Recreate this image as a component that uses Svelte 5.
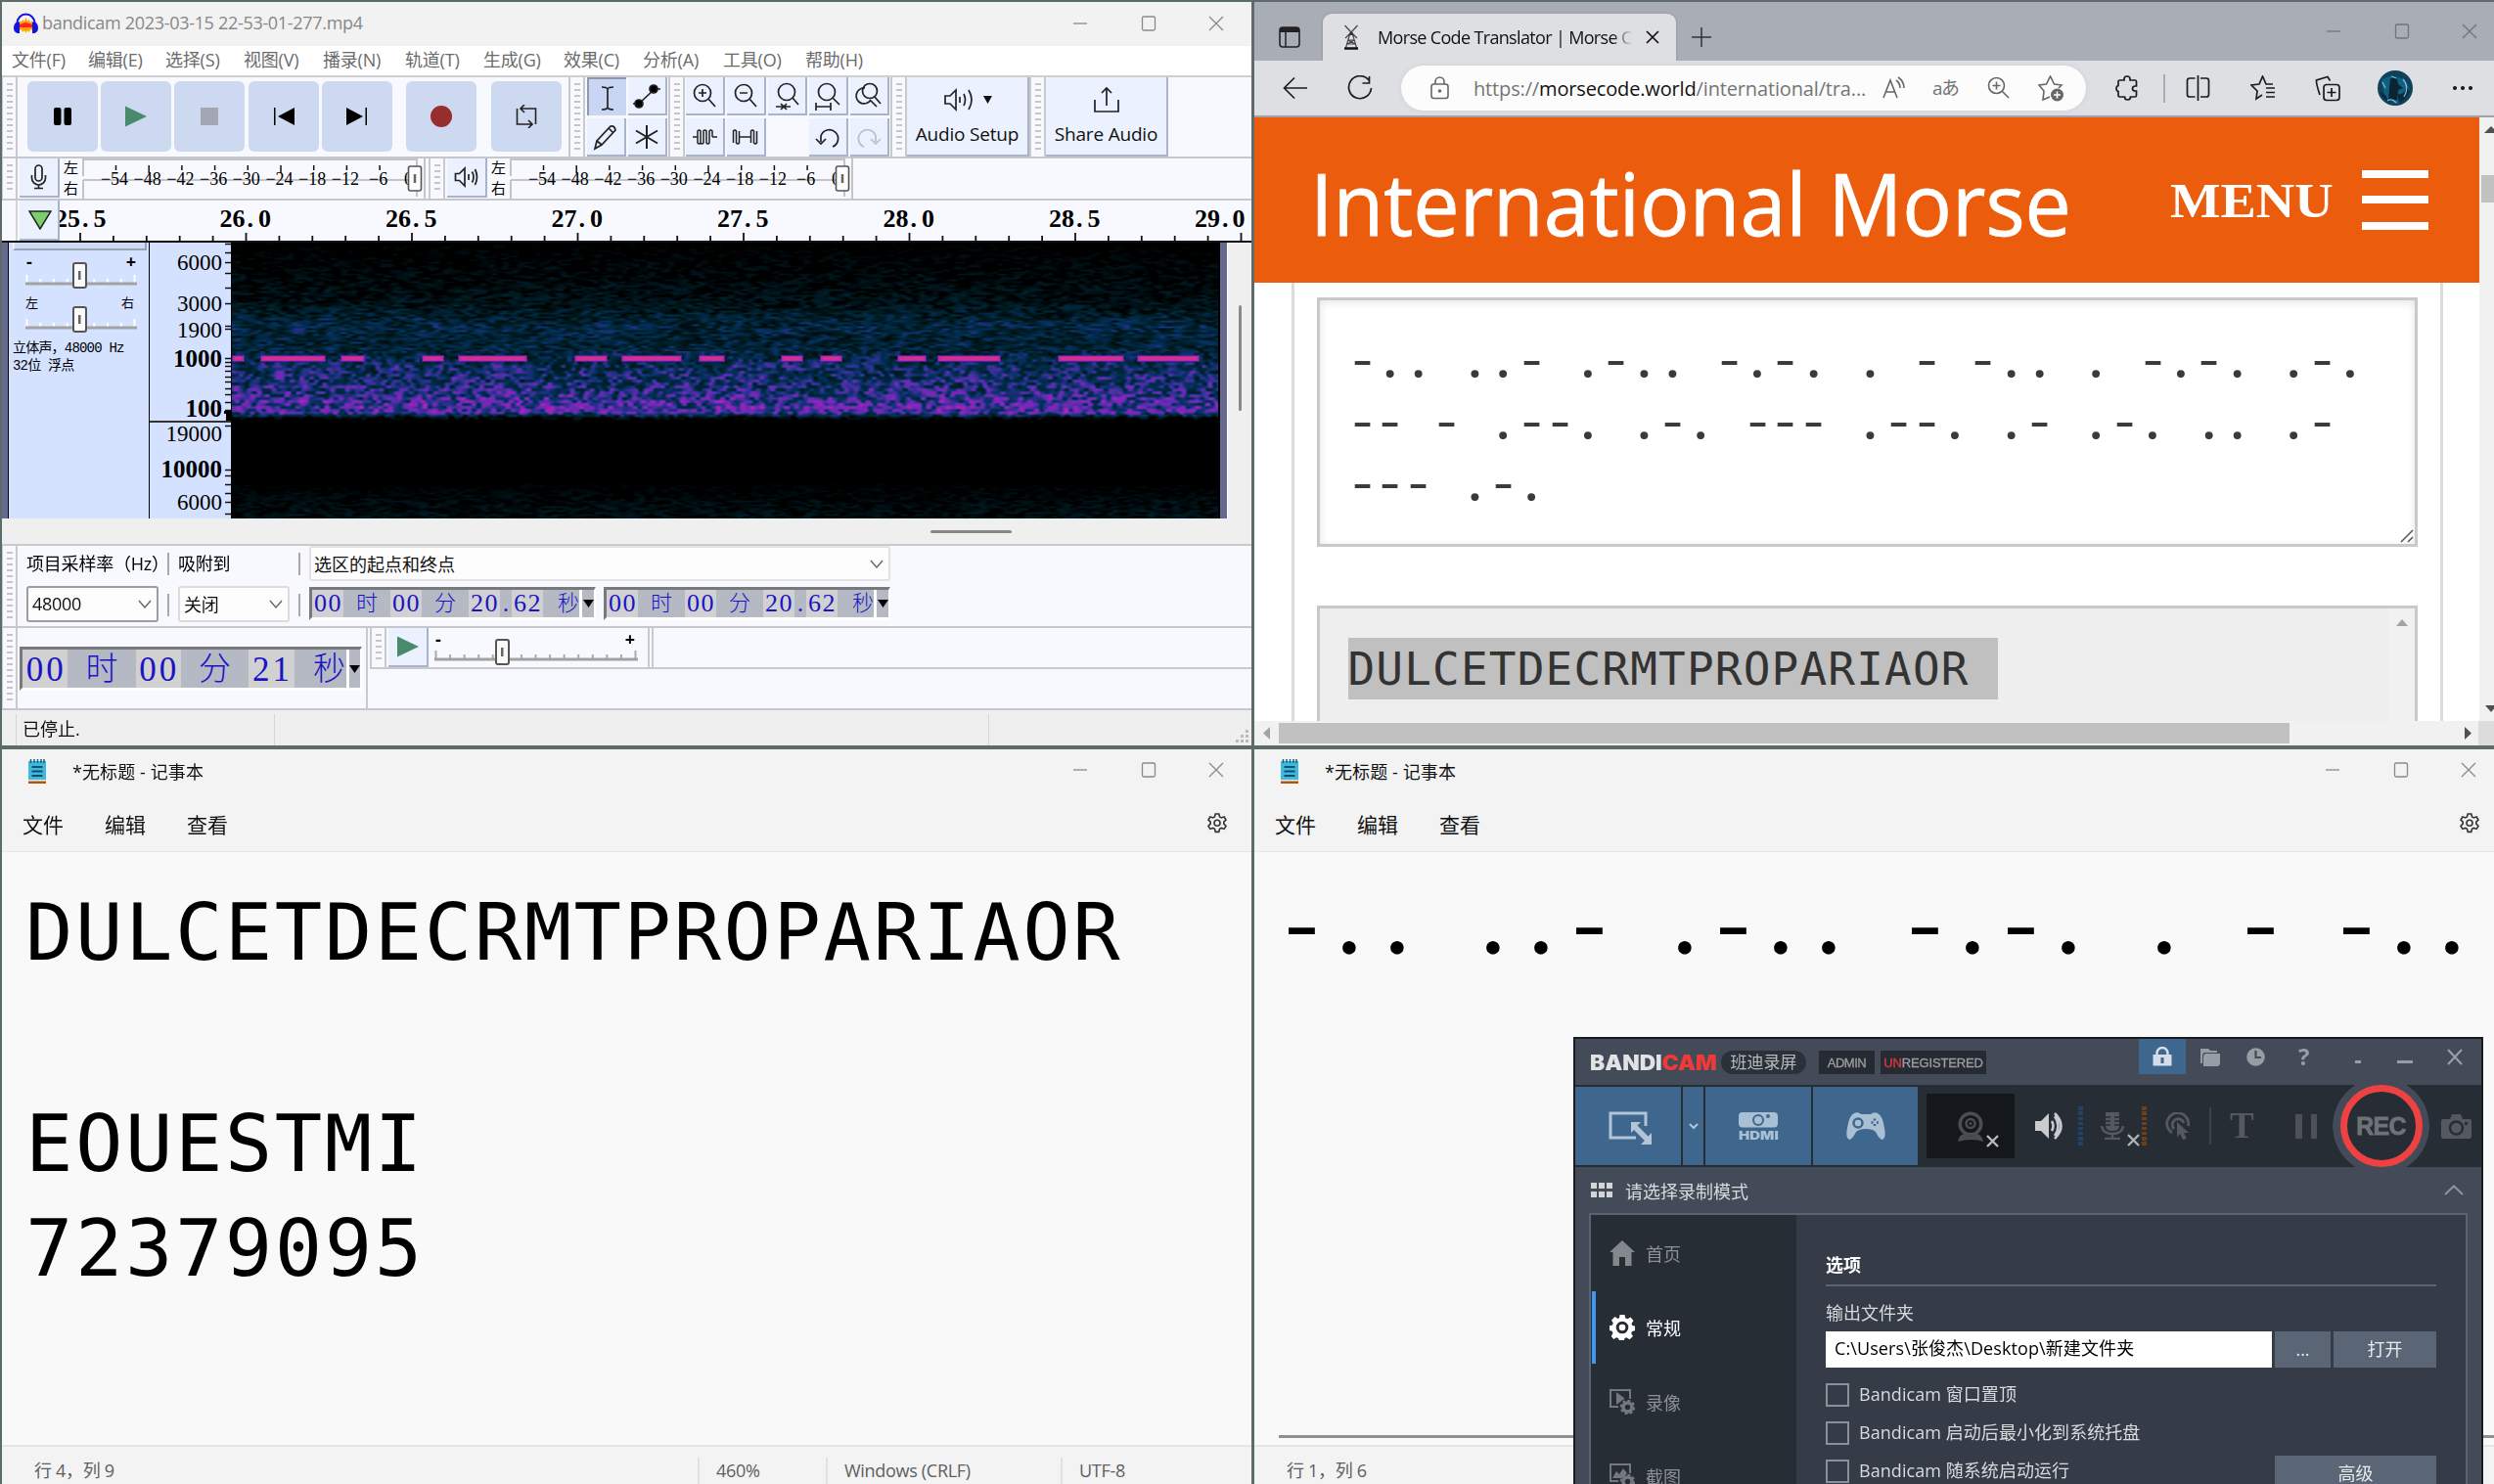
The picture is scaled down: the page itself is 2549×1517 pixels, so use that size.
<script>
  const menus = ['文件(F)', '编辑(E)', '选择(S)', '视图(V)', '播录(N)', '轨道(T)', '生成(G)', '效果(C)', '分析(A)', '工具(O)', '帮助(H)'];
  const dbs = [54, 48, 42, 36, 30, 24, 18, 12, 6];
  const rulerTicks = Array.from({ length: 36 }, (_, i) => i);
  const rulerLabels = ['26.0', '26.5', '27.0', '27.5', '28.0', '28.5'];
  const freqs = [
    { t: '6000', y: 20 }, { t: '3000', y: 62 }, { t: '1900', y: 88.5 }, { t: '1000', y: 118.5, b: true }, { t: '100', y: 169.5, b: true },
    { t: '19000', y: 195 }, { t: '10000', y: 232, b: true }, { t: '6000', y: 265 }
  ];
  const freqTicks = [1, 10, 20, 31, 46, 62, 85, 88, 118, 122, 126, 131, 137, 142, 149, 155, 163, 171, 187, 232, 238, 247, 256, 265, 277];
  const tones = [[0, 13], [29, 96], [111, 136], [194, 217], [231, 302], [350, 384], [398, 460], [477, 504], [561, 584], [601, 624], [680, 710], [721, 786], [844, 912], [925, 989]];
  const selTime = [['00', 'd'], ['时', 'u'], ['00', 'd'], ['分', 'u'], ['20', 'd'], ['.', 'p'], ['62', 'd'], ['秒', 'l']];
  const nowTime = [['00', 'd'], ['时', 'u'], ['00', 'd'], ['分', 'u'], ['21', 'd'], ['秒', 'l']];
  const morseLines = [
    '-.. ..- .-.. -.-. . - -.. . -.-. .-.',
    '-- - .--. .-. --- .--. .- .-. .. .-',
    '--- .-.'
  ];
  const morseShort = '-.. ..- .-.. -.-. . - -..';
  const leds = [0, 1, 2, 3, 4, 5, 6, 7];
  const options = ['Bandicam 窗口置顶', 'Bandicam 启动后最小化到系统托盘', 'Bandicam 随系统启动运行'];

  const stops = [
    [0, 0, 0, 0], [0.28, 0, 30, 40], [0.46, 2, 46, 84], [0.6, 38, 48, 138],
    [0.74, 96, 44, 174], [0.9, 144, 34, 186], [1, 180, 40, 165]
  ];
  function shade(v) {
    v = Math.max(0, Math.min(1, v));
    let i = 1;
    while (i < stops.length - 1 && v > stops[i][0]) i++;
    const a = stops[i - 1], b = stops[i];
    const k = (v - a[0]) / (b[0] - a[0]);
    return [1, 2, 3].map((c) => a[c] + (b[c] - a[c]) * k);
  }
  function hash(x, y) {
    let h = Math.imul(x, 374761393) + Math.imul(y, 668265263);
    h = Math.imul(h ^ (h >>> 13), 1274126177);
    return ((h ^ (h >>> 16)) >>> 0) / 4294967295;
  }
  // One lattice row, shifted by its own random phase so that columns do not line up.
  function rowNoise(x, iy) {
    x += hash(iy, 7919) * 9;
    const ix = Math.floor(x);
    let fx = x - ix;
    fx = fx * fx * (3 - 2 * fx);
    return hash(ix, iy) * (1 - fx) + hash(ix + 1, iy) * fx;
  }
  function noise(x, y) {
    const iy = Math.floor(y);
    let fy = y - iy;
    fy = fy * fy * (3 - 2 * fy);
    return rowNoise(x, iy) * (1 - fy) + rowNoise(x, iy + 1) * fy;
  }
  // [y, level, noise amplitude]
  const profile = [
    [0, -0.04, 0.12], [25, 0.03, 0.18], [62, 0.14, 0.22], [78, 0.3, 0.26], [86, 0.36, 0.26], [100, 0.31, 0.24], [116, 0.37, 0.26], [126, 0.47, 0.3],
    [150, 0.55, 0.34], [163, 0.66, 0.36], [173, 0.71, 0.36], [176, 0.42, 0.3], [179, 0.05, 0.3], [183, -0.1, 0], [238, -0.1, 0],
    [250, 0.01, 0.11], [270, 0.09, 0.17], [283, 0.12, 0.19]
  ];
  function spectrum(canvas) {
    const w = canvas.width, h = canvas.height;
    const ctx = canvas.getContext('2d');
    const img = ctx.createImageData(w, h);
    for (let y = 0; y < h; y++) {
      let i = 1;
      while (i < profile.length - 1 && y > profile[i][0]) i++;
      const a = profile[i - 1], b = profile[i];
      const k = (y - a[0]) / (b[0] - a[0]);
      const level = a[1] + (b[1] - a[1]) * k;
      const amp = a[2] + (b[2] - a[2]) * k;
      const low = y > 110 && y < 200;
      const sx = low ? 5 : 7, sy = low ? 3 : 2;
      for (let x = 0; x < w; x++) {
        const n = noise(x / sx, y / sy) * 0.8 + noise(x / 23 + 90, y / 7) * 0.2;
        const c = shade(level + amp * (n - 0.5) * 2.2);
        const o = (y * w + x) * 4;
        img.data[o] = c[0];
        img.data[o + 1] = c[1];
        img.data[o + 2] = c[2];
        img.data[o + 3] = 255;
      }
    }
    ctx.putImageData(img, 0, 0);
    for (const [s, e] of tones) {
      ctx.fillStyle = 'rgba(110,28,180,.75)';
      ctx.fillRect(s, 115, e - s, 7);
      ctx.fillStyle = '#b828a8';
      ctx.fillRect(s + 1, 116, e - s - 2, 5);
      ctx.fillStyle = '#d2318f';
      ctx.fillRect(s + 3, 117, Math.max(0, e - s - 6), 3);
    }
  }
</script>

{#snippet controls()}
  <div class="controls">
    <svg viewBox="0 0 16 18"><path d="M1 9h14" /></svg>
    <svg viewBox="0 0 16 18"><rect x="1.5" y="2" width="13" height="14" rx="1.5" /></svg>
    <svg viewBox="0 0 16 18"><path d="M1 2l14 14M15 2L1 16" /></svg>
  </div>
{/snippet}

{#snippet grip()}<div class="grip"><i></i></div>{/snippet}

{#snippet meter(kind)}
  <div class="tool io">
    {#if kind === 'mic'}
      <svg width="18" height="26" viewBox="0 0 18 26"><rect x="5" y="1" width="7" height="16" rx="3.5" /><path d="M1.5 11v3a7 7 0 0 0 14 0v-3M8.500 21v3M4 24.500h9" /></svg>
    {:else}
      <svg width="26" height="22" viewBox="0 0 26 22"><path d="M1.500 7.500v7h4L11 20V2L5.500 7.500zM15 8v6M18.500 5.500q3 5.500 0 11M21.500 3q4 8 0 16" /></svg>
    {/if}
  </div>
  <div class="lr"><span>左</span><span>右</span></div>
  <svg class="scale" width="354" height="41" viewBox="0 0 354 41">
    <path d="M0 1h342M1 1v17M1 22v19M1 22h341M342 0v39M350 0v41" stroke="#c4c4c4" stroke-width="2" fill="none" />
    {#each dbs as d, i}
      <path d="M{34.5 + i * 33.7} 7v{d % 24 === 0 ? 8 : 5}" stroke="#111" stroke-width="1.500" />
      <text x={33 + i * 33.7} y="27" text-anchor="middle">−{d}</text>
    {/each}
    <text x="329" y="27">0</text>
    <rect x="333.500" y="8" width="13" height="25" rx="2" fill="#fdfdfd" stroke="#555" stroke-width="1.600" />
    <path d="M340 16v9" stroke="#666" stroke-width="2.500" />
  </svg>
{/snippet}

{#snippet slider(n, width)}
  <svg class="slider" {width} height="28" viewBox="0 0 {width} 28" preserveAspectRatio="none">
    {#each Array(n) as _, i}
      <path d="M{1.5 + (i * (width - 4)) / (n - 1)} {i === 0 || i === n - 1 ? 7 : 11}V15" stroke={n > 12 ? '#aaa' : '#fff'} stroke-width="2" />
    {/each}
    <path d="M0 16h{width}" stroke="#a2a2a2" stroke-width="3" />
  </svg>
{/snippet}

{#snippet timebox(parts, size)}
  <div class="time {size}">
    {#each parts as [t, k]}<span class={k}>{t}</span>{/each}
    <b><svg width="11" height="8" viewBox="0 0 11 8"><path d="M0 0h11L5.500 8z" /></svg></b>
  </div>
{/snippet}

{#snippet morse(line)}{#each line as ch}<span class:dash={ch === '-'}>{ch}</span>{/each}{/snippet}

{#snippet notepad(pos, second)}
  <div class="win note">
    <header>
      <svg class="pad" width="18" height="25" viewBox="0 0 18 25"><rect y="2" width="18" height="19" fill="#3fb8de" /><path d="M2.500 0v4M6 0v4M9.500 0v4M13 0v4M16 0v4" stroke="#155f7c" stroke-width="1.500" /><path d="M3.500 8h11M3.500 12.500h11M3.500 17h11" stroke="#10506c" stroke-width="1.800" /><path d="M0 21h18v1.500H0z" fill="#e8e8e8" /><path d="M0 22.500h18V25H0z" fill="#b4540c" /></svg>
      <span>*无标题 - 记事本</span>
      {@render controls()}
    </header>
    <nav>
      <span>文件</span><span>编辑</span><span>查看</span>
      <svg width="24" height="24" viewBox="0 0 24 24"><path d="M10.200 2h3.600l.7 3 1.800 1 2.900-1 1.800 3.100-2.200 2.100v2l2.200 2.100-1.800 3.100-2.900-1-1.800 1-.7 3h-3.600l-.7-3-1.800-1-2.900 1L3 14.300l2.200-2.100v-2L3 8.100 4.800 5l2.900 1 1.800-1z" /><circle cx="12" cy="11.200" r="3" /></svg>
    </nav>
    <main>
      {#if second}
        <div class="bigmorse">{@render morse(morseShort)}</div>
        <div class="hscroll"></div>
      {:else}
        <p>DULCETDECRMTPROPARIAOR</p>
        <p>&nbsp;</p>
        <p>EOUESTMI</p>
        <p>72379095</p>
      {/if}
    </main>
    <footer><span>{pos}</span>{#if !second}<span>460%</span><span>Windows (CRLF)</span><span>UTF-8</span>{/if}</footer>
  </div>
{/snippet}

<div class="desk">
  <div class="win aud">
    <header>
      <svg width="25" height="22" viewBox="0 0 25 22"><path d="M6 8l2 2 1-3 2 2 1.500-4L14 9l2-2 1 3 2-2v10l-2-1-1 3-2-2-1.500 3-1.500-3-2 2-1-3-2 1z" fill="#ffa200" /><path d="M6 12l3-1 3-1 4 1 3 1v3H6z" fill="#f22" /><path d="M3.500 14V11a9 9.500 0 0 1 18 0v3" fill="none" stroke="#1414e0" stroke-width="2" /><path d="M3 9.500q-3 2-3 6T3.500 21H6V9.500zM22 9.500q3 2 3 6T21.500 21H19V9.500z" fill="#1414e0" /></svg>
      <span>bandicam 2023-03-15 22-53-01-277.mp4</span>
      {@render controls()}
    </header>
    <nav>{#each menus as m}<span>{m}</span>{/each}</nav>

    <div class="row r1">
      {@render grip()}
      <div class="transport">
        <div class="key"><svg width="20" height="20" viewBox="0 0 20 20"><rect x="1" y="1" width="7.500" height="18" rx="2" /><rect x="11.500" y="1" width="7.500" height="18" rx="2" /></svg></div>
        <div class="key"><svg width="22" height="22" viewBox="0 0 22 22"><path d="M0 0.500L22 11 0 21.500z" fill="#478a6c" /></svg></div>
        <div class="key"><svg width="18" height="18" viewBox="0 0 18 18"><path d="M0 0h18v18H0z" fill="#a2a7b3" /></svg></div>
        <div class="key"><svg width="22" height="20" viewBox="0 0 22 20"><path d="M1 1h1.500v18H1zM22 1v18L5 10z" /></svg></div>
        <div class="key"><svg width="22" height="20" viewBox="0 0 22 20"><path d="M19.500 1H21v18h-1.500zM0 1v18l17-9z" /></svg></div>
        <div class="key rec"><svg width="22" height="22" viewBox="0 0 22 22"><circle cx="11" cy="11" r="11" fill="#972e2e" /></svg></div>
        <div class="key loop"><svg width="24" height="24" viewBox="0 0 24 24"><path d="M7 4h14.500v16M2.500 4v16H17M10 0L6 4l4 4M14 16l4 4-4 4" fill="none" stroke="#222" stroke-width="1.600" /></svg></div>
      </div>
      {@render grip()}
      <div class="tools two">
        <div class="tool on"><svg viewBox="0 0 28 28"><path d="M8 3q5 0 6 2 1-2 6-2M14 4v20M8 26q5 0 6-2 1 2 6 2" /></svg></div>
        <div class="tool"><svg viewBox="0 0 28 28"><path d="M0 22h6L22 7h6" /><circle cx="6" cy="22" r="4" fill="#000" /><circle cx="21" cy="7" r="4" fill="#000" /></svg></div>
        <div class="tool"><svg viewBox="0 0 28 28"><path d="M3 26l2-8L19 3q4-1 5 4L10 22zM17 5l5 5M5 18l5 4" /></svg></div>
        <div class="tool"><svg viewBox="0 0 28 28"><path d="M14 2v24M3 7.500l22 13M25 7.500l-22 13" stroke-width="2" /></svg></div>
      </div>
      {@render grip()}
      <div class="tools five">
        <div class="tool"><svg viewBox="0 0 28 28"><circle cx="12" cy="11" r="8.500" /><path d="M18 17l7 8M12 7v8M8 11h8" /></svg></div>
        <div class="tool"><svg viewBox="0 0 28 28"><circle cx="12" cy="11" r="8.500" /><path d="M18 17l7 8M8 11h8" /></svg></div>
        <div class="tool"><svg viewBox="0 0 28 28"><circle cx="14" cy="10" r="8.500" /><path d="M20 16l6 7M3 25h15M8 22l3 3-3 3M14 22l-3 3 3 3" /></svg></div>
        <div class="tool"><svg viewBox="0 0 28 28"><circle cx="13" cy="10" r="8.500" /><path d="M19 16l7 7M2 25h15M2 21v8M17 21v8" /></svg></div>
        <div class="tool"><svg viewBox="0 0 28 28"><circle cx="15" cy="9" r="7.500" /><path d="M10 6a8 8 0 1 0 6 12M20 15l6 7M15 18l7 7" /></svg></div>
        <div class="tool wave"><svg viewBox="0 0 28 28"><path d="M2 14h5M7 14V8q1.500-2 3 0v12q1.500 2 3 0V8q1.500-2 3 0v12q1.500 2 3 0V8q1.500-2 3 0v6M7 14v6q1.500 2 3 0M22 14h5" /></svg></div>
        <div class="tool wave"><svg viewBox="0 0 28 28"><path d="M1.500 20V8q1.500-2 3 0v12q1.500 2 3 0V8M8 14h11M19.500 20V8q1.500-2 3 0v12q1.500 2 3 0V8" /></svg></div>
        <div></div>
        <div class="tool"><svg viewBox="0 0 28 28"><path d="M7 19V13a9 9 0 1 1 12 11M2 16l5 5 5-5" /></svg></div>
        <div class="tool dim"><svg viewBox="0 0 28 28"><path d="M21 19V13a9 9 0 1 0-12 11M26 16l-5 5-5-5" /></svg></div>
      </div>
      {@render grip()}
      <div class="tool big">
        <div><svg width="32" height="26" viewBox="0 0 32 26"><path d="M2 9v8h5l6 6V3L7 9zM17 10v6M21 7q3 6 0 12M26 3q6 10 0 20" /></svg><svg class="tri" width="9" height="8" viewBox="0 0 9 8"><path d="M0 0h9L4.500 8z" /></svg></div>
        <span>Audio Setup</span>
      </div>
      {@render grip()}
      <div class="tool big share">
        <div><svg width="28" height="28" viewBox="0 0 28 28"><path d="M2 14v12h24V14M14 20V2M9 7l5-5 5 5" /></svg></div>
        <span>Share Audio</span>
      </div>
    </div>

    <div class="row r2">
      {@render grip()}
      {@render meter('mic')}
      {@render grip()}
      {@render meter('spk')}
    </div>

    <div class="row r3">
      <div class="gutter"></div>
      <div class="tool io"><svg width="24" height="20" viewBox="0 0 24 20"><path d="M1 1h22L12 19z" fill="#79d069" stroke="#222" stroke-width="1.500" /></svg></div>
      <svg class="ruler" width="1217" height="41" viewBox="0 0 1217 41">
        {#each rulerTicks as i}<path d="M{21 + i * 33.9} {i % 5 === 0 ? 33 : 36}V41" stroke="#111" stroke-width="1.800" />{/each}
        <text x="-5" y="27">25<tspan dx="2">.</tspan><tspan dx="5">5</tspan></text>
        {#each rulerLabels as l, i}<text x={163.5 + i * 169.5} y="27">{l.slice(0, 2)}<tspan dx="2">.</tspan><tspan dx="5">{l.slice(3)}</tspan></text>{/each}
        <text x="1160" y="27">29<tspan dx="2">.</tspan><tspan dx="4">0</tspan></text>
      </svg>
    </div>

    <div class="track">
      <div class="edge"></div>
      <div class="panel">
        <div class="collapse"></div>
        <div class="ends"><span>-</span><span>+</span></div>
        <div class="sl">{@render slider(9, 114)}<i></i></div>
        <div class="ends cjk"><span>左</span><span>右</span></div>
        <div class="sl">{@render slider(9, 114)}<i></i></div>
        <p>立体声，48000 Hz</p>
        <p>32位 浮点</p>
      </div>
      <svg class="freq" width="83" height="282" viewBox="0 0 83 282">
        {#each freqs as f}<text x="74" y={f.y + 8} text-anchor="end" class:bold={f.b}>{f.t}</text>{/each}
        {#each freqTicks as y}<path d="M77 {y}.500h6" stroke="#111" stroke-width="1.500" />{/each}
        <path d="M0 183h83" stroke="#333" stroke-width="2" /><path d="M76 172h7v10h-5v-7h-2z" fill="#000" />
      </svg>
      <canvas width="1008" height="282" use:spectrum></canvas>
      <div class="end"></div>
      <div class="vs"><i></i></div>
    </div>
    <div class="hs"><i></i></div>

    <div class="row sel">
      {@render grip()}
      <div class="col rate"><label>项目采样率（Hz）</label><div class="combo strong">48000<svg width="14" height="9" viewBox="0 0 14 9"><path d="M1 1l6 7 6-7" /></svg></div></div>
      <div class="col bars"><i></i><i></i></div>
      <div class="col snap"><label>吸附到</label><div class="combo">关闭<svg width="14" height="9" viewBox="0 0 14 9"><path d="M1 1l6 7 6-7" /></svg></div></div>
      <div class="col bars"><i></i><i></i></div>
      <div class="col range">
        <div class="combo">选区的起点和终点<svg width="14" height="9" viewBox="0 0 14 9"><path d="M1 1l6 7 6-7" /></svg></div>
        <div class="pair">{@render timebox(selTime, 'small')}{@render timebox(selTime, 'small')}</div>
      </div>
    </div>
    <div class="row play">
      {@render grip()}
      <div class="now">{@render timebox(nowTime, 'large')}</div>
      <div class="rest">
        <div class="speed">
          {@render grip()}
          <div class="tool io"><svg width="22" height="22" viewBox="0 0 22 22"><path d="M0 0.500L22 11 0 21.500z" fill="#478a6c" /></svg></div>
          <div class="sp"><div class="ends"><span>-</span><span>+</span></div><div class="sl">{@render slider(15, 208)}<i></i></div></div>
          <div class="stop"></div>
        </div>
      </div>
    </div>
    <footer><span>已停止.</span><span></span><svg width="14" height="14" viewBox="0 0 14 14"><path d="M10 0h3v3h-3zM10 5h3v3h-3zM5 5h3v3H5zM10 10h3v3h-3zM5 10h3v3H5zM0 10h3v3H0z" fill="#bbb" /></svg></footer>
  </div>

  <div class="win web">
    <header>
      <svg class="tabs" width="22" height="22" viewBox="0 0 22 22"><rect x="1" y="1" width="20" height="20" rx="3" fill="none" stroke="#222" stroke-width="1.600" /><path d="M1 6V4q0-3 3-3h14q3 0 3 3v2z" fill="#222" /><path d="M7 6v15" stroke="#222" stroke-width="1.500" /></svg>
      <div class="tab">
        <svg width="18" height="26" viewBox="0 0 18 26"><path d="M3.500 24L7.500 10h3l4 14M2.500 1L9 8l6.500-7M3 14l6-6 6 6M6 16h6M5 20h8M6 16l7 4M12 16l-7 4" fill="none" stroke="#444" stroke-width="1.200" /><path d="M7.500 8h3v3h-3z" fill="#333" /><path d="M2 24.500h14" stroke="#111" stroke-width="2.500" /></svg>
        <span>Morse Code Translator | Morse C</span>
        <svg class="x" width="14" height="14" viewBox="0 0 14 14"><path d="M1 1l12 12M13 1L1 13" stroke="#111" stroke-width="1.700" /></svg>
      </div>
      <svg class="plus" width="22" height="22" viewBox="0 0 22 22"><path d="M11 1v20M1 11h20" stroke="#333" stroke-width="1.500" /></svg>
      {@render controls()}
    </header>
    <div class="bar">
      <svg class="back" width="26" height="24" viewBox="0 0 26 24"><path d="M25 12H2M12 1.500L1.500 12 12 22.500" /></svg>
      <svg class="reload" width="26" height="26" viewBox="0 0 26 26"><path d="M22 5A11.500 11.500 0 1 0 24.500 13M22.500 1v7h-7" /></svg>
      <div class="url">
        <svg width="20" height="24" viewBox="0 0 20 24"><rect x="1" y="8" width="17" height="14.500" rx="2.500" /><path d="M5 8V5.500a4.500 4.500 0 0 1 9 0V8" /><circle cx="9.500" cy="15" r="1" fill="#666" /></svg>
        <span>https://<b>morsecode.world</b>/international/tra...</span>
        <svg class="g1" width="24" height="24" viewBox="0 0 24 24"><path d="M1 22L8 4l7 18M3.500 16h9M14 4q4 3 4 8M16 1q6 4 6 11" /></svg>
        <em>aあ</em>
        <svg class="g2" width="24" height="24" viewBox="0 0 24 24"><circle cx="9.500" cy="9.500" r="8" /><path d="M15.500 15.500L22 22M9.500 5.500v8M5.500 9.500h8" /></svg>
        <svg class="g3" width="27" height="27" viewBox="0 0 27 27"><path d="M12 22l-7 3 1-9-5-6 7.500-1L12.500 1l4 8 7.500 1-3 3" /><circle cx="19.500" cy="20" r="6.500" fill="#666" stroke="none" /><path d="M19.500 16.500v7M16 20h7" stroke="#fff" /></svg>
      </div>
      <svg class="i1" width="26" height="26" viewBox="0 0 26 26"><path d="M4.500 5H9q-.5-4 3-4t3 4H20q1.500 0 1.500 1.500V11h-1q-3 0-3 2.500t3 2.500h1v4.500Q21.500 22 20 22h-4.500q0 3-3 3t-3-3h-5Q3 22 3 20.500V16.500Q1 16 1 13.500t2-3v-4Q3 5 4.500 5z" /></svg>
      <i class="vsep"></i>
      <svg class="i2" width="25" height="26" viewBox="0 0 25 26"><path d="M9.500 3H4Q1.500 3 1.500 5.500v14Q1.500 22 4 22h5.500M15 3h6q2.500 0 2.500 2.500v14Q23.500 22 21 22h-6M12.500 0v26" /></svg>
      <svg class="i3" width="26" height="26" viewBox="0 0 26 26"><path d="M12 20l-6 4 1-8-6-6 8-1 3.500-8L16 9h7M16 13h9M16 17.500h9M16 22h9" /></svg>
      <svg class="i4" width="26" height="27" viewBox="0 0 26 27"><rect x="9" y="9.500" width="16" height="16" rx="3" /><path d="M17 13v9M12.500 17.500h9M5 20Q1 8 1.500 5L13 1.500l2.500 4" /></svg>
      <svg class="face" width="36" height="36" viewBox="0 0 36 36"><circle cx="18" cy="18" r="18" fill="#10405c" /><path d="M4 10q10-8 24 0l4 8q-4 12-12 16L8 30z" fill="#0e5f80" /><path d="M3 22q6 2 8 10l-4-3q-4-3-4-7zM20 24q6 2 10-6l2 4q-3 8-10 11z" fill="#0b2a3c" /><path d="M13 9q3-4 7 0l1 5 5 4-5 2-1 10-9 2 1-14z" fill="#0a2434" /><path d="M26 9q7 8 1 18M10 31q5-3 9 2M14 6l5 2M5 12l3 6" stroke="#78bdd4" stroke-width="1.300" fill="none" /></svg>
      <svg class="dots" width="22" height="6" viewBox="0 0 22 6"><circle cx="3" cy="3" r="2" /><circle cx="11" cy="3" r="2" /><circle cx="19" cy="3" r="2" /></svg>
    </div>
    <div class="view">
      <div class="page">
        <div class="hero"><h1>International Morse</h1><strong>MENU</strong><div class="burger"><i></i><i></i><i></i></div></div>
        <div class="card">
          <div class="area">
            {#each morseLines as line}<div class="mline">{@render morse(line)}</div>{/each}
            <svg width="14" height="14" viewBox="0 0 14 14"><path d="M1 13L13 1M8 13l5-5" stroke="#555" stroke-width="1.500" /></svg>
          </div>
          <div class="out"><mark>DULCETDECRMTPROPARIAOR</mark><div class="osb"><svg width="12" height="7" viewBox="0 0 12 7"><path d="M0 7h12L6 0z" fill="#a3a3a3" /></svg></div></div>
        </div>
      </div>
      <div class="vbar"><svg width="13" height="8" viewBox="0 0 13 8"><path d="M3 7h14L10 0z" fill="#505050" /></svg><i></i><svg class="dn" width="13" height="8" viewBox="0 0 13 8"><path d="M4 0h12l-6 7z" fill="#505050" /></svg></div>
    </div>
    <div class="hbar"><svg width="7" height="13" viewBox="0 0 7 13"><path d="M7 0v13L0 6.500z" fill="#a3a3a3" /></svg><i></i><svg class="rt" width="7" height="13" viewBox="0 0 7 13"><path d="M0 0v13l7-6.500z" fill="#505050" /></svg><u></u></div>
  </div>

  {@render notepad('行 4，列 9', false)}
  {@render notepad('行 1，列 6', true)}
</div>

<div class="bandi">
  <header>
    <div class="logo">BANDI<b>CAM</b></div>
    <div class="pill">班迪录屏</div>
    <div class="tag admin">ADMIN</div>
    <div class="tag unreg"><b>UN</b>REGISTERED</div>
    <div class="lock"><svg width="20" height="20" viewBox="0 0 20 20"><path d="M4.500 9V6.500a5.500 5.500 0 0 1 11 0V9" fill="none" stroke="#d4dde8" stroke-width="2.500" /><path d="M.5 8h19v11.500H.5z" fill="#d4dde8" /><path d="M8.500 11h3v6h-3z" fill="#3f678e" /></svg></div>
    <svg class="h1" width="21" height="19" viewBox="0 0 21 19"><path d="M0 16V1h8l2 2h7v2H4L2 7v9z" /><path d="M3 18V8l2-2h15v11l-2 2H3z" /></svg>
    <svg class="h2" width="19" height="19" viewBox="0 0 19 19"><circle cx="9.500" cy="9.500" r="9.300" /><path d="M9.500 3v7H15" stroke="#424b57" stroke-width="2.200" fill="none" /></svg>
    <span class="q">?</span>
    <i class="m1"></i><i class="m2"></i>
    <svg class="h3" width="16" height="17" viewBox="0 0 16 17"><path d="M1 1l14 15M15 1L1 16" stroke="#9aa0a8" stroke-width="2" /></svg>
  </header>
  <div class="modes">
    <div class="mode w1"><svg width="47" height="35" viewBox="0 0 47 35"><path d="M38 15V2H2v25h26" fill="none" stroke="#b1c4d8" stroke-width="3" /><path d="M23 11h10l-3.500 3.500 11 11L44 22v12H33l4-4-11-11-3 3z" fill="#b1c4d8" /></svg></div>
    <div class="mode w2"><svg width="10" height="7" viewBox="0 0 10 7"><path d="M1 1l4 4 4-4" fill="none" stroke="#b1c4d8" stroke-width="2" /></svg></div>
    <div class="mode w1"><div class="hdmi"><svg width="40" height="16" viewBox="0 0 40 16"><rect width="40" height="15.500" rx="4" fill="#a9bfd4" /><circle cx="20" cy="8" r="5" fill="none" stroke="#3f678e" stroke-width="2" /><circle cx="30" cy="4" r="2" fill="#3f678e" /></svg><span>HDMI</span></div></div>
    <div class="mode w3"><svg width="40" height="28" viewBox="0 0 40 28"><path d="M8 1q4-2 7 1h10q3-3 7-1 5 2 7 15 2 10-2 12-3 0-7-8-3-3-10-3t-10 3q-4 8-7 8-4-2-2-12Q3 3 8 1z" fill="#a9bfd4" /><circle cx="12" cy="11" r="4.500" fill="none" stroke="#3f678e" stroke-width="2.500" /><path d="M29 6.500v2M29 12v2M25.500 10.500h2M31 10.500h2" stroke="#3f678e" stroke-width="2.600" /></svg></div>
    <div class="cam"><svg width="28" height="31" viewBox="0 0 28 31"><circle cx="14" cy="13" r="10.800" fill="none" stroke="#4a4d52" stroke-width="3.500" /><circle cx="14" cy="12.500" r="4.500" fill="none" stroke="#4a4d52" stroke-width="2.500" /><circle cx="14" cy="12.500" r="1.500" fill="#4a4d52" /><path d="M1 31q1-6 6-8 7 5 14 0 5 2 6 8-12-4-26 0z" fill="#4a4d52" /></svg><svg class="cx" width="13" height="13" viewBox="0 0 13 13"><path d="M1 1l11 11M12 1L1 12" stroke="#b8babd" stroke-width="2.400" /></svg></div>
    <svg class="s1" width="30" height="28" viewBox="0 0 30 28"><path d="M0 9h6l8-8v26l-8-8H0z" fill="#c9cbce" /><path d="M17 9q3 5 0 10M20 4q7 10 0 20M20 1q13 13 0 26" fill="none" stroke="#c9cbce" stroke-width="2.600" /></svg>
    <div class="led blue">{#each leds as _}<i></i>{/each}</div>
    <svg class="s2" width="24" height="28" viewBox="0 0 24 28"><path d="M5 0h14v14q0 5-7 5t-7-5z" fill="#55585e" /><path d="M1 14q1 8 11 8t11-8M12 22v4M4 27h16" fill="none" stroke="#55585e" stroke-width="2.500" /><path d="M4 5h6M14 5h6M4 9h6M14 9h6M4 13h6M14 13h6" stroke="#262d35" stroke-width="1.500" /></svg>
    <svg class="s3" width="13" height="13" viewBox="0 0 13 13"><path d="M1 1l11 11M12 1L1 12" stroke="#b0b2b5" stroke-width="2.400" /></svg>
    <div class="led amber">{#each leds as _}<i></i>{/each}</div>
    <svg class="s4" width="26" height="28" viewBox="0 0 26 28"><path d="M7 21A11 11 0 1 1 23.500 14M9 17a6 6 0 1 1 10-6" fill="none" stroke="#55585e" stroke-width="2.800" /><path d="M12 10l12 11h-5l3 6-4 1-3-6-3 4z" fill="#55585e" /></svg>
    <i class="s5"></i>
    <span class="s6">T</span>
    <div class="s7"><i></i><i></i></div>
    <div class="record"><div>REC</div></div>
    <svg class="s8" width="31" height="25" viewBox="0 0 31 25"><path d="M2 5h7l2-5h9l2 5h7q2 0 2 2v16q0 2-2 2H2q-2 0-2-2V7q0-2 2-2z" fill="#55585e" /><circle cx="15.500" cy="14" r="6.500" fill="none" stroke="#262d35" stroke-width="2.500" /><path d="M24 8h3v3h-3z" fill="#262d35" /></svg>
  </div>
  <div class="caption"><div class="grid6"><i></i><i></i><i></i><i></i><i></i><i></i></div><span>请选择录制模式</span><svg width="20" height="11" viewBox="0 0 20 11"><path d="M1 10l9-8.500L19 10" fill="none" stroke="#8d949d" stroke-width="2" /></svg></div>
  <div class="pane">
    <aside>
      <div><svg viewBox="0 0 26 26"><path d="M13 0l13 12h-3.500v14h-6.500v-9h-6v9H3.500V12H0z" fill="#84878c" /></svg>首页</div>
      <div class="cur"><svg viewBox="0 0 26 26"><path d="M10.500 0h5l.8 3.500 2 .8L21.500 2.500l3 3.500-2 3 .8 2 2.700.6v4.600l-3 .8-.8 2 1.800 3-3.500 3.200-3-1.900-2 .8-.8 2.900h-4.800l-.7-3-2-.8-3 1.900L1.800 22l1.700-3.200-.8-2L0 16v-4.800l3-.7.800-2L2 5.500 5.500 2l3 1.900 1.500-.7z" fill="#fff" /><circle cx="13" cy="13" r="4.800" fill="none" stroke="#262d35" stroke-width="3" /></svg>常规</div>
      <div><svg viewBox="0 0 26 26"><path d="M9 18H1V1h20v9M8 5l6 4.500L8 14z" fill="none" stroke="#75797f" stroke-width="2" /><path d="M8 5l6 4.500L8 14z" fill="#75797f" /><circle cx="18.500" cy="18.500" r="4.500" fill="none" stroke="#75797f" stroke-width="3.500" /><circle cx="18.500" cy="18.500" r="6.800" fill="none" stroke="#75797f" stroke-width="2" stroke-dasharray="3 2.300" /></svg>录像</div>
      <div><svg viewBox="0 0 26 26"><path d="M9 18H1V1h20v9" fill="none" stroke="#75797f" stroke-width="2" /><path d="M3 15l4-7 3 3 4-6 4 5-5 5z" fill="#75797f" /><circle cx="18.500" cy="18.500" r="4.500" fill="none" stroke="#75797f" stroke-width="3.500" /><circle cx="18.500" cy="18.500" r="6.800" fill="none" stroke="#75797f" stroke-width="2" stroke-dasharray="3 2.300" /></svg>截图</div>
    </aside>
    <section>
      <h2>选项</h2>
      <label>输出文件夹</label>
      <div class="path"><div class="field">C:\Users\张俊杰\Desktop\新建文件夹</div><div class="btn more">...</div><div class="btn open">打开</div></div>
      <div class="opts">
        <div>{#each options as o}<div class="opt"><i></i>{o}</div>{/each}</div>
        <div class="btn adv">高级</div>
      </div>
    </section>
  </div>
</div>

<style>
  :global(body) { margin: 0; overflow: hidden; background: #56696a; }
  * { box-sizing: border-box; }
  .desk { width: 2549px; height: 1517px; padding: 2px 0 0 2px; background: #5d6b6a; display: grid; grid-template-columns: 1277px 1267px; grid-template-rows: 760px 751px; gap: 4px 3px; font: 18px "Open Sans", "Noto Sans CJK SC", sans-serif; white-space: nowrap; overflow: hidden; }
  .win { display: flex; flex-direction: column; overflow: hidden; }
  .win header { display: flex; align-items: center; flex: none; }
  svg { flex: none; display: block; }
  .controls { margin-left: auto; display: flex; gap: 53.500px; }
  .controls svg { width: 16px; height: 18px; fill: none; stroke: #8a8a8a; stroke-width: 1.300; }

  /* audio editor */
  .aud { background: #f8f9fe; }
  .aud header { height: 45px; background: #f2f2f2; padding-left: 12px; color: #888; }
  .aud header > svg { margin-top: -2px; }
  .aud header span { margin: -3px 0 0 4px; letter-spacing: -0.310px; }
  .aud .controls { margin: -1px 28px 0 auto; }
  .aud nav { height: 32px; flex: none; background: #fff; border-bottom: 2px solid #cfcfcf; display: grid; grid-template-columns: 78px 79px 80px 81px 84px 80px 82px 81px 82px 84px 90px; padding-left: 10px; color: #6b6b6b; line-height: 29px; letter-spacing: -0.200px; }
  .row { display: flex; flex: none; border-bottom: 2px solid #c6c7ca; }
  .grip { flex: none; width: 17px; border-left: 2px solid #c9cacd; border-right: 2px solid #c9cacd; padding: 6px 3px 5px 4px; display: flex; }
  .row > .grip:first-child { border-left-width: 1px; width: 16px; }
  .grip i { flex: 1; background: repeating-linear-gradient(#c6c6c6 0 2px, transparent 2px 6px); }
  .r1 { height: 83px; }
  .transport { display: flex; padding: 4px 0 0 10px; gap: 3.200px; width: 563px; }
  .key { width: 72px; height: 72px; border-radius: 6px; background: #cdd9f1; display: grid; place-items: center; }
  .key.rec, .key.loop { margin-left: 11.500px; }
  .tool { background: #ebf1fe; border-right: 2px solid #a9b4cc; border-bottom: 2px solid #a9b4cc; display: grid; place-items: center; }
  .tool svg { fill: none; stroke: #222; stroke-width: 1.700; }
  .tools { display: grid; gap: 3px 2px; grid-auto-rows: 39px; }
  .tools .tool svg { width: 28px; height: 28px; overflow: visible; }
  .two { grid-template-columns: 40px 40px; margin: 0 0 0 2px; width: 83px; }
  .five { grid-template-columns: repeat(5, 40px); margin: 0 0 0 1px; width: 209px; }
  .tool.on { background: #c9d6f3; border: 0; border-top: 2px solid #8f98ac; border-left: 2px solid #8f98ac; }
  .tool.dim svg { stroke: #b9bfcb; }
  .tool.wave svg { stroke-width: 1.500; }
  .tool.big { width: 125px; margin: 0; height: 81px; display: flex; flex-direction: column; align-items: center; font-size: 19px; color: #111; }
  .tool.big div { display: flex; gap: 9px; align-items: center; height: 46px; }
  .tool.big .tri { fill: #111; stroke: none; }
  .tool.big span { letter-spacing: -0.200px; line-height: 24px; }
  .share { margin-left: 1px; }
  .r2 { height: 43px; }
  .tool.io { width: 41px; height: 40px; margin-left: 2px; padding-left: 1px; flex: none; }
  .lr { width: 23px; display: flex; flex-direction: column; justify-content: space-between; font-size: 15px; line-height: 19px; padding: 0 0 1px 4px; }
  .scale { overflow: visible; }
  .scale text { font: 18px "Liberation Serif", serif; }
  .r3 { height: 43px; border-bottom: 2px solid #111; }
  .gutter { width: 16px; border-right: 2px solid #d4d5d8; }
  .r3 .io { height: 41px; padding-left: 2px; }
  .r3 .io svg { stroke: none; }
  .ruler text { font: bold 26px "Liberation Serif", serif; }
  .track { display: flex; flex: none; height: 282px; background: #000; }
  .edge { width: 6px; margin-right: 1px; background: #666a8c; }
  .panel { width: 143px; background: #d5e2ff; padding: 0 2px 0 4px; }
  .collapse { height: 8px; border: 2px solid #98a3ba; border-top: 0; border-left-color: #eef; background: #cddaf2; }
  .ends { display: flex; justify-content: space-between; width: 114px; padding: 0 1px; margin-left: 13px; height: 13px; line-height: 12px; margin-top: 5px; font-weight: 700; }
  .ends.cjk { font-size: 13px; font-weight: 400; margin-top: 9px; padding: 0 3px 0 0; }
  .sl { position: relative; width: 114px; height: 28px; margin-left: 13px; margin-top: -6px; }
  .panel .sl { margin-top: 6px; height: 20px; }
  .panel .ends.cjk + .sl { margin-top: 9px; }
  .sl i { position: absolute; left: 48px; top: -6px; width: 15px; height: 27px; border: 2px solid #555; border-radius: 3px; background: linear-gradient(#666, #666) center/2.500px 9px no-repeat #fafafa; }
  .slider { margin-top: -6px; overflow: visible; }
  .panel p { margin: 0; font: 14px/18px "Liberation Mono", "Noto Sans CJK SC", monospace; letter-spacing: -0.800px; height: 18px; }
  .panel .sl + p { margin-top: 8px; }
  .freq { background: #d5e2ff; margin-left: 1px; }
  .freq text { font: 23px "Liberation Serif", serif; }
  .freq .bold { font-weight: bold; font-size: 25px; }
  canvas { display: block; margin-left: 1px; }
  .end { width: 7px; margin-left: 2px; background: #666a8c; }
  .vs { flex: 1; background: #efefef; padding: 64px 0 0 11px; border-left: 1px solid #fff; }
  .vs i { display: block; width: 3px; height: 108px; background: #8a8a8a; border-radius: 2px; }
  .hs { height: 26px; flex: none; background: #efefef; padding: 12px 0 0 949px; }
  .hs i { display: block; width: 83px; height: 3px; background: #868686; border-radius: 2px; }
  .sel { height: 86px; border-top: 2px solid #c9cacd; }
  .col { display: flex; flex-direction: column; flex: none; }
  .col label { height: 41px; line-height: 37px; letter-spacing: -0.200px; }
  .combo { height: 37px; background: #fdfdfd; border: 2px solid #dcdcdc; border-radius: 3px; display: flex; align-items: center; justify-content: space-between; padding: 0 5px 1px 4px; color: #111; letter-spacing: -0.300px; }
  .combo svg { fill: none; stroke: #666; stroke-width: 1.400; }
  .combo.strong { border-color: #9d9d9d; font-size: 18px; }
  .rate { width: 135px; margin-left: 9px; }
  .snap { width: 114px; margin-left: 9px; }
  .bars { width: 11px; align-items: flex-end; gap: 19px; padding-top: 7px; }
  .bars i { width: 2px; height: 23px; background: #a9a9a9; }
  .range { margin-left: 9px; width: 594px; }
  .range .combo { height: 36px; border-color: #e2e2e2; margin-bottom: 6px; letter-spacing: 0; padding: 0 5px 0 3px; }
  .pair { display: flex; justify-content: space-between; }
  .time { display: flex; background: #b4b9c4; border-top: 3px solid #77797d; border-left: 3px solid #77797d; border-bottom: 3px solid #fff; border-right: 2px solid #fff; color: #1a14c4; font-family: "Liberation Serif", "Noto Sans CJK SC", serif; font-weight: 300; }
  .time span { text-align: center; }
  .time .d { background: #d1d1d2; }
  .time .l { text-align: right; }
  .time b { border-left: 3px solid #fff; display: grid; place-items: center; flex: 1; }
  .time.small { width: 293px; height: 34px; font-size: 26px; line-height: 28px; }
  .small .d { width: 32px; letter-spacing: 1.500px; padding-left: 1px; }
  .small .u { width: 48px; font-size: 22px; }
  .small .p { width: 12px; }
  .small .l { width: 37px; font-size: 22px; }
  .time.large { width: 350px; height: 45px; font-size: 35px; line-height: 41px; }
  .large .d { width: 47px; letter-spacing: 3px; padding-left: 2px; }
  .large .u { width: 70px; font-size: 33px; }
  .large .l { width: 54px; font-size: 33px; padding-right: 1px; }
  .play { height: 84px; }
  .now { width: 356px; padding: 19px 0 0 2px; flex: none; }
  .rest { flex: 1; border-left: 2px solid #c9cacd; padding-left: 2px; }
  .speed { height: 42px; display: flex; border-bottom: 2px solid #c9cacd; }
  .speed .io svg { stroke: none; }
  .sp { width: 224px; }
  .sp .ends { margin: 5px 0 0 6px; width: 206px; }
  .sp .sl { width: 208px; margin: 4px 0 0 6px; }
  .sp .sl .slider { margin-top: -6px; }
  .sp .sl i { left: 62px; top: -5px; }
  .stop { width: 6px; border-left: 2px solid #c9cacd; border-right: 2px solid #c9cacd; }
  .aud footer { flex: 1; background: #efefef; display: flex; padding: 4px 2px 0 14px; line-height: 31px; color: #111; }
  .aud footer span { border-left: 1px solid #d6d6d6; width: 264px; padding-left: 6px; }
  .aud footer span:nth-child(2) { border-right: 1px solid #d6d6d6; width: 731px; }
  .aud footer svg { margin: 16px 0 0 auto; }

  /* browser */
  .web { background: #fff; }
  .web header { height: 60px; background: #a9aeb6; padding-left: 25px; }
  .web .controls { margin-right: 17px; }
  .web .controls svg { stroke: #70747a; }
  .tabs { margin-top: 12px; }
  .tab { margin: 12px 0 0 23px; width: 361px; height: 48px; background: #dedfe3; border-radius: 9px 9px 0 0; display: flex; align-items: center; padding-left: 20px; box-shadow: 0 0 3px #888c94; clip-path: inset(-4px -4px 0); }
  .tab span { margin: -1px 0 0 18px; width: 261px; letter-spacing: -0.660px; -webkit-mask-image: linear-gradient(90deg, #000 92%, transparent); mask-image: linear-gradient(90deg, #000 92%, transparent); color: #111; }
  .tab .x { margin-left: 13px; }
  .plus { margin: 12px 0 0 15px; }
  .bar { height: 58px; flex: none; background: #dddfe3; border-bottom: 2px solid #9fa2a8; display: flex; align-items: center; padding-left: 29px; }
  .bar svg { fill: none; stroke: #1c1c1c; stroke-width: 1.700; }
  .reload { margin-left: 40px; }
  .url { margin-left: 29px; width: 700px; height: 46px; border-radius: 23px; background: #fcfcfc; display: flex; align-items: center; padding-left: 30px; color: #757575; font-size: 20px; box-shadow: 0 0 5px #cdcfd4; }
  .url svg, .bar .url svg { stroke: #666; stroke-width: 1.600; }
  .url span { margin-left: 24px; width: 410px; letter-spacing: -0.150px; }
  .url b { font-weight: 400; color: #111; }
  .url .g1 { margin-left: 8px; }
  .url em { font-style: normal; font-size: 19px; margin: -2px 0 0 27px; width: 28px; letter-spacing: -1.500px; }
  .url .g2 { margin-left: 28px; }
  .url .g3 { margin-left: 28px; }
  .i1 { margin-left: 30px; }
  .vsep { width: 2px; height: 29px; background: #a9acb2; margin-left: 23px; }
  .i2 { margin-left: 21px; }
  .i3 { margin-left: 41px; }
  .i4 { margin-left: 40px; }
  .bar .face { margin-left: 38px; stroke: none; }
  .bar .dots { margin-left: 40px; fill: #111; stroke: none; }
  .view { display: flex; height: 617px; flex: none; }
  .page { width: 1252px; overflow: hidden; display: flex; flex-direction: column; align-items: center; }
  .hero { width: 1252px; height: 169px; flex: none; background: #eb5d0d; color: #fff; display: flex; align-items: center; padding-left: 57px; }
  .hero h1 { margin: 4px 0 0; font: 87px/100px "Open Sans", sans-serif; width: 879px; transform-origin: left; transform: scaleX(0.969); -webkit-text-stroke: 0.800px; }
  .hero strong { font: bold 50.500px/60px "Liberation Serif", serif; width: 167px; margin-top: 0; transform-origin: left; transform: scaleX(1.080); }
  .burger { display: grid; gap: 18.500px; margin: -1px 0 0 29px; }
  .burger i { width: 68px; height: 8px; background: #fff; }
  .card { width: 1177px; flex: none; height: 460px; border: solid #dcdcdc; border-width: 0 3px; padding: 15px 0 0 23px; }
  .area { width: 1125px; height: 255px; border: 3px solid #c9c9c9; box-shadow: inset 0 2px 8px #e4e4e4; padding: 28px 0 0 29px; color: #3a3a3a; position: relative; }
  .mline { height: 63px; line-height: 63px; display: flex; font-size: 52px; font-family: Lato, sans-serif; font-weight: 700; }
  .mline span { width: 28.870px; text-align: center; white-space: pre; }
  .mline .dash, .bigmorse .dash { font-weight: 400; transform: translateY(0.012em) scaleX(1.220); }
  .area svg { position: absolute; right: 1px; bottom: 1px; }
  .out { margin-top: 60px; width: 1125px; height: 200px; border: 3px solid #c9c9c9; background: #eee; padding: 30px 0 0 29px; display: flex; justify-content: space-between; }
  .out mark { background: #c0c0c0; color: #333; height: 63px; width: 664px; font: 46px/65px "DejaVu Sans Mono", monospace; letter-spacing: 1.180px; }
  .osb { width: 26px; background: #f1f1f1; margin-top: -30px; padding: 11px 7px; }
  .vbar { width: 15px; background: #f1f1f1; padding: 9px 0 0 2px; overflow: hidden; }
  .vbar i { display: block; height: 28px; margin-top: 42px; background: #c1c1c1; }
  .dn { margin-top: 514px; }
  .hbar { height: 25px; background: #f1f1f1; display: flex; align-items: center; padding-left: 9px; }
  .hbar i { width: 1033px; height: 21px; background: #c1c1c1; margin-left: 9px; }
  .rt { margin-left: 179px; }
  .hbar u { width: 16px; height: 25px; background: #dcdcdc; margin-left: auto; }

  /* text editor */
  .note { background: #f3f3f3; color: #111; width: 1277px; }
  .note header { height: 42px; padding: 0 28px 0 27px; }
  .note .pad { margin-top: 2px; }
  .note header span { margin-left: 27px; letter-spacing: 0.100px; margin-top: 2px; }
  .note nav { height: 64px; flex: none; display: flex; align-items: center; padding: 6px 23px 0 21px; font-size: 21px; border-bottom: 2px solid #e5e5e5; margin-bottom: -1px; }
  .note nav span { width: 84px; }
  .note nav svg { margin-left: auto; fill: none; stroke: #333; stroke-width: 1.600; }
  .note main { flex: 1; background: #f9f9f9; position: relative; padding: 29px 0 0 24px; }
  .note p { margin: 0; font: 80.500px/107.800px "DejaVu Sans Mono", monospace; letter-spacing: 2.500px; height: 107.800px; color: #000; }
  .bigmorse { display: flex; font: 900 89px/108px Lato, sans-serif; color: #000; margin: -11px 0 0 -0.500px; }
  .bigmorse span { width: 49px; text-align: center; white-space: pre; font-size: 83px; }
  .bigmorse .dash { font-size: 89px; }
  .hscroll { position: absolute; left: 25px; right: 0; bottom: 7px; height: 3px; background: #8f8f8f; }
  .note footer { height: 40px; flex: none; border-top: 2px solid #e5e5e5; display: flex; padding: 11px 0 0 33px; line-height: 27px; color: #5e5e5e; letter-spacing: -0.300px; }
  .note footer span { border-left: 2px solid #e2e2e2; padding-left: 17px; height: 29px; width: 131px; }
  .note footer span:first-child { width: 678px; padding-left: 0; border: 0; }
  .note footer span:nth-child(3) { width: 240px; }

  /* recorder */
  .bandi { position: absolute; left: 1608px; top: 1060px; width: 930px; height: 457px; overflow: hidden; border: 2px solid #181c22; border-bottom: 0; background: #424b57; font: 18px "Open Sans", "Noto Sans CJK SC", sans-serif; color: #d8dade; white-space: nowrap; display: flex; flex-direction: column; }
  .bandi header { height: 47px; flex: none; display: flex; align-items: flex-start; padding-left: 14px; }
  .bandi header > svg { fill: #979da5; }
  .logo { width: 132px; margin: 13px 0 0; font: 900 21px/24px Inter, sans-serif; color: #e2e3e5; letter-spacing: 0; padding-left: 1px; transform-origin: left; transform: scaleX(1.080); }
  .logo b { color: #f03a3a; font-weight: 900; }
  .pill { margin: 12px 0 0 3px; width: 87px; height: 24px; border-radius: 12px; background: #2b3139; text-align: center; font-size: 17px; line-height: 23px; color: #b6b9bd; }
  .tag { margin-top: 12px; height: 24px; background: #262b33; color: #9b9ea3; font: 13px/25px "Liberation Sans", sans-serif; text-align: center; -webkit-text-stroke: 0.300px; letter-spacing: -0.450px; }
  .tag b { color: #e03a3a; font-weight: 400; }
  .admin { width: 57px; margin-left: 13px; }
  .unreg { width: 108px; margin-left: 6px; letter-spacing: -0.150px; }
  .lock { width: 48px; height: 36px; background: #3f678e; margin-left: 156px; display: grid; place-items: center; }
  .h1 { margin: 9px 0 0 15px; }
  .h2 { margin: 9px 0 0 26px; }
  .q { font: bold 24px/36px "Open Sans", sans-serif; color: #979da5; margin-left: 34px; width: 16px; }
  .m1 { width: 6px; height: 3px; background: #979da5; margin: 22px 0 0 42px; }
  .m2 { width: 16px; height: 3px; background: #979da5; margin: 22px 0 0 37px; }
  .h3 { margin: 10px 0 0 35px; }
  .modes { height: 84px; flex: none; background: #262d35; display: flex; align-items: center; }
  .mode { height: 80px; background: #3f678e; margin-right: 2px; display: grid; place-items: center; color: #a9bfd4; }
  .w1 { width: 108px; }
  .w1 > svg { margin: 4px 0 0 7px; }
  .w2 { width: 21px; }
  .w3 { width: 107px; margin: 0; }
  .hdmi span { display: block; font: 900 12px/10px Inter, sans-serif; margin-top: 3px; transform-origin: left; transform: scaleX(1.250); }
  .cam { width: 90px; height: 66px; background: #14171b; margin-left: 9px; display: flex; padding: 18px 0 0 31px; }
  .cam .cx { margin: 24px 0 0 2px; }
  .s1 { margin-left: 21px; }
  .led { display: grid; gap: 1.500px; width: 5px; }
  .led i { height: 3.600px; }
  .blue { margin-left: 14px; }
  .blue i { background: #1f4468; }
  .amber i { background: #6c3f14; }
  .s2 { margin-left: 18px; }
  .s3 { margin: 29px 2px 0 3px; }
  .s4 { margin-left: 19px; }
  .s5 { width: 2px; height: 38px; background: #3d434b; margin-left: 19px; }
  .s6 { font: bold 37px/40px "Liberation Serif", serif; color: #55585e; margin-left: 19px; width: 27px; }
  .s7 { display: flex; gap: 9px; margin-left: 40px; }
  .s7 i { width: 6.500px; height: 25px; background: #4d5157; }
  .record { width: 99px; height: 84px; overflow: hidden; margin-left: 16px; background: radial-gradient(circle at center, #424b57 49px, transparent 49.500px); }
  .record div { width: 84px; height: 84px; margin-left: 7.500px; border-radius: 50%; border: 7px solid #ee4242; background: #262d35; display: grid; place-items: center; font: bold 25px "Liberation Sans", sans-serif; color: #6f7175; letter-spacing: -0.800px; -webkit-text-stroke: 0.800px; }
  .s8 { margin-left: 12px; }
  .caption { height: 47px; flex: none; display: flex; align-items: center; padding: 0 18px 0 16px; }
  .grid6 { display: grid; grid-template-columns: 6px 6px 6px; grid-auto-rows: 6px; gap: 3px 2px; }
  .grid6 i { background: #d4d5d7; }
  .caption span { margin-left: 13px; }
  .caption svg { margin-left: auto; }
  .pane { margin: 0 14px; flex: 1; border: 2px solid #596471; border-bottom: 0; display: flex; overflow: hidden; }
  aside { width: 210px; background: #262d35; padding-top: 1px; flex: none; }
  aside div { height: 76px; display: flex; align-items: center; gap: 11px; padding-left: 19px; color: #8d9095; }
  aside svg { width: 26px; height: 26px; }
  aside .cur { color: #fff; background: linear-gradient(#3d98f0, #3d98f0) 1px center/4px 74px no-repeat; }
  section { flex: 1; background: #353b47; padding: 35px 30px 0; }
  h2 { margin: 0; font-size: 18px; font-weight: 700; height: 38px; line-height: 32px; border-bottom: 2px solid #596471; color: #fff; }
  section label { display: block; height: 46px; line-height: 54px; }
  .path { display: flex; gap: 3px; height: 37px; }
  .field { width: 456px; background: #fff; color: #000; line-height: 34px; padding-left: 9px; letter-spacing: 0.100px; }
  .btn { background: #5a6675; text-align: center; line-height: 37px; color: #e8eaec; }
  .more { width: 57px; }
  .open { width: 105px; }
  .opts { display: flex; justify-content: space-between; padding-top: 16px; }
  .opt { height: 39px; display: flex; gap: 10px; letter-spacing: 0.060px; line-height: 23px; }
  .opt i { width: 24px; height: 24px; border: 2px solid #8b9098; }
  .adv { width: 165px; height: 40px; margin-top: 74px; }
</style>
